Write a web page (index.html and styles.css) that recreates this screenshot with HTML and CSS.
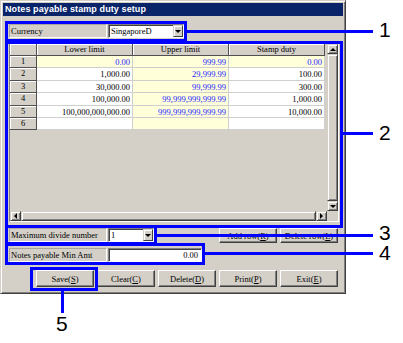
FILE: index.html
```html
<!DOCTYPE html>
<html lang="en">

<head>
    <meta charset="UTF-8">
    <title>Notes payable stamp duty setup</title>
    <link rel="stylesheet" href="styles.css">
</head>

<body>
    <div class="stage">
        <div class="dialog">
            <div class="titlebar">Notes payable stamp duty setup</div>

            <div class="content">
                <!-- Currency -->
                <div class="field-row">
                    <div class="field-label">Currency</div>
                    <div class="combo combo-currency">
                        <span class="combo-text">SingaporeD</span>
                        <span class="combo-btn"><span class="arrow-down"></span></span>
                    </div>
                </div>

                <!-- Rate table -->
                <div class="grid">
                    <div class="grid-main">
                        <div class="grid-view">
                            <div class="sheet">
                                <div class="hd"></div>
                                <div class="hd">Lower limit</div>
                                <div class="hd">Upper limit</div>
                                <div class="hd">Stamp duty</div>

                                <div class="hd">1</div>
                                <div class="cell yl bl">0.00</div>
                                <div class="cell yl bl">999.99</div>
                                <div class="cell yl bl">0.00</div>

                                <div class="hd">2</div>
                                <div class="cell">1,000.00</div>
                                <div class="cell yl bl">29,999.99</div>
                                <div class="cell">100.00</div>

                                <div class="hd">3</div>
                                <div class="cell">30,000.00</div>
                                <div class="cell yl bl">99,999.99</div>
                                <div class="cell">300.00</div>

                                <div class="hd">4</div>
                                <div class="cell">100,000.00</div>
                                <div class="cell yl bl">99,999,999,999.99</div>
                                <div class="cell">1,000.00</div>

                                <div class="hd">5</div>
                                <div class="cell">100,000,000,000.00</div>
                                <div class="cell yl bl">999,999,999,999.99</div>
                                <div class="cell">10,000.00</div>

                                <div class="hd">6</div>
                                <div class="cell"></div>
                                <div class="cell yl"></div>
                                <div class="cell"></div>
                            </div>
                        </div>
                        <div class="vscroll">
                            <div class="sb-btn"><span class="arrow-up"></span></div>
                            <div class="sb-thumb"></div>
                            <div class="sb-btn"><span class="arrow-down"></span></div>
                        </div>
                    </div>
                    <div class="hscroll">
                        <div class="sb-btn"><span class="arrow-left"></span></div>
                        <div class="sb-thumb"></div>
                        <div class="sb-btn"><span class="arrow-right"></span></div>
                        <div class="sb-corner"></div>
                    </div>
                </div>

                <!-- Divide number + row buttons -->
                <div class="field-row row-divide">
                    <div class="field-label">Maximum divide number</div>
                    <div class="combo combo-divide">
                        <span class="combo-text">1</span>
                        <span class="combo-btn"><span class="arrow-down"></span></span>
                    </div>
                    <div class="row-buttons">
                        <button class="btn">Add row(<u>R</u>)</button>
                        <button class="btn">Delete row(<u>L</u>)</button>
                    </div>
                </div>

                <!-- Min amount -->
                <div class="field-row row-min">
                    <div class="field-label">Notes payable Min Amt</div>
                    <div class="text-input">0.00</div>
                </div>

                <!-- Action buttons -->
                <div class="button-row">
                    <button class="btn">Save(<u>S</u>)</button>
                    <button class="btn">Clear(<u>C</u>)</button>
                    <button class="btn">Delete(<u>D</u>)</button>
                    <button class="btn">Print(<u>P</u>)</button>
                    <button class="btn">Exit(<u>E</u>)</button>
                </div>
            </div>
        </div>

        <!-- Callouts -->
        <div class="callout-box box-1"></div>
        <div class="callout-line line-1"></div>
        <div class="callout-num num-1">1</div>

        <div class="callout-box box-2"></div>
        <div class="callout-line line-2"></div>
        <div class="callout-num num-2">2</div>

        <div class="callout-box box-3"></div>
        <div class="callout-line line-3"></div>
        <div class="callout-num num-3">3</div>

        <div class="callout-box box-4"></div>
        <div class="callout-line line-4"></div>
        <div class="callout-num num-4">4</div>

        <div class="callout-box box-5"></div>
        <div class="callout-line line-5"></div>
        <div class="callout-num num-5">5</div>
    </div>
</body>

</html>
```

FILE: styles.css
```css
/* Win2000-style dialog with numbered callouts */
body {
    margin: 0;
    background: #fff;
    font-family: "Liberation Serif", serif;
    font-size: 8.5px;
    color: #000;
}

.stage {
    position: relative;
    width: 403px;
    height: 343px;
    overflow: hidden;
}

.dialog {
    width: 346px;
    height: 294px;
    box-sizing: border-box;
    background: #d4d0c8;
    border: 1px solid;
    border-color: #d4d0c8 #404040 #404040 #d4d0c8;
    box-shadow: inset 1px 1px #fff, inset -1px -1px #808080;
    padding: 2px;
}

.titlebar {
    height: 13px;
    line-height: 13px;
    padding-left: 2px;
    background: #0a246a;
    color: #fff;
    font-family: "Liberation Sans", sans-serif;
    font-weight: bold;
    font-size: 9px;
    letter-spacing: 0.1px;
}

.content {
    padding: 8px 5px 0 6px;
}

/* Label + field rows */
.field-row {
    display: flex;
    align-items: flex-start;
    height: 14px;
}

.field-label {
    width: 98px;
    height: 14px;
    box-sizing: border-box;
    line-height: 12px;
    padding-left: 1px;
    border: 1px solid;
    border-color: #a9a69f #fff #fff #a9a69f;
    white-space: nowrap;
}

.combo,
.text-input {
    display: flex;
    height: 14px;
    box-sizing: border-box;
    margin-left: 1px;
    background: #fff;
    border: 1px solid;
    border-color: #808080 #fff #fff #808080;
    box-shadow: inset 1px 1px #404040;
}

.combo-currency {
    width: 76px;
}

.combo-divide {
    width: 46px;
}

.combo-text {
    flex: 1;
    line-height: 12px;
    padding-left: 2px;
}

.combo-btn {
    display: flex;
    align-items: center;
    justify-content: center;
    width: 10px;
    height: 12px;
    box-sizing: border-box;
    background: #d4d0c8;
    border: 1px solid;
    border-color: #d4d0c8 #404040 #404040 #d4d0c8;
    box-shadow: inset 1px 1px #fff;
}

.text-input {
    display: block;
    width: 94px;
    text-align: right;
    line-height: 12px;
    padding-right: 3px;
}

.arrow-down,
.arrow-up,
.arrow-left,
.arrow-right {
    width: 0;
    height: 0;
}

.arrow-down {
    border-left: 3px solid transparent;
    border-right: 3px solid transparent;
    border-top: 3px solid #000;
}

.arrow-up {
    border-left: 3px solid transparent;
    border-right: 3px solid transparent;
    border-bottom: 3px solid #000;
}

.arrow-left {
    border-top: 3px solid transparent;
    border-bottom: 3px solid transparent;
    border-right: 3px solid #000;
}

.arrow-right {
    border-top: 3px solid transparent;
    border-bottom: 3px solid transparent;
    border-left: 3px solid #000;
}

/* Grid */
.grid {
    width: 330px;
    height: 179px;
    box-sizing: border-box;
    margin-top: 5px;
    border: 1px solid;
    border-color: #808080 #fff #fff #808080;
    background: #d4d0c8;
}

.grid-main {
    display: flex;
    height: 167px;
}

.grid-view {
    width: 317px;
    overflow: hidden;
}

.sheet {
    display: grid;
    grid-template-columns: 27px 96px 96px 96px;
    grid-template-rows: 12px repeat(6, 12.4px);
}

.hd {
    box-sizing: border-box;
    background: #d4d0c8;
    border-right: 1px solid #505050;
    border-bottom: 1px solid #505050;
    box-shadow: inset 1px 1px #fff;
    text-align: center;
    line-height: 11px;
}

.cell {
    box-sizing: border-box;
    background: #fff;
    border-right: 1px solid #cfcfcf;
    border-bottom: 1px solid #cfcfcf;
    text-align: right;
    padding-right: 2px;
    line-height: 12px;
    white-space: nowrap;
}

.cell.yl {
    background: #ffffd9;
}

.cell.bl {
    color: #2424ff;
}

/* Scrollbars */
.vscroll {
    display: flex;
    flex-direction: column;
    width: 11px;
}

.hscroll {
    display: flex;
    height: 10px;
}

.sb-btn {
    display: flex;
    align-items: center;
    justify-content: center;
    flex: 0 0 10px;
    height: 10px;
    box-sizing: border-box;
    background: #d4d0c8;
    border: 1px solid;
    border-color: #d4d0c8 #404040 #404040 #d4d0c8;
    box-shadow: inset 1px 1px #fff, inset -1px -1px #808080;
}

.vscroll .sb-btn {
    flex-basis: 10px;
    width: 11px;
}

.hscroll .sb-btn {
    width: 11px;
    flex-basis: 11px;
}

.sb-thumb {
    flex: 1;
    box-sizing: border-box;
    background: #d4d0c8;
    border: 1px solid;
    border-color: #d4d0c8 #404040 #404040 #d4d0c8;
    box-shadow: inset 1px 1px #fff, inset -1px -1px #808080;
}

.sb-corner {
    width: 11px;
    background: #d4d0c8;
}

/* Buttons */
.row-divide {
    margin-top: 6px;
}

.row-buttons {
    display: flex;
    gap: 3px;
    margin-left: auto;
}

.row-min {
    margin-top: 6px;
}

.button-row {
    display: flex;
    gap: 3px;
    margin-top: 8px;
    padding-left: 27px;
}

.btn {
    width: 58px;
    height: 17px;
    padding: 0;
    background: #d4d0c8;
    border: 1px solid;
    border-color: #fff #404040 #404040 #fff;
    box-shadow: inset -1px -1px #808080;
    font-family: "Liberation Serif", serif;
    font-size: 8.5px;
    color: #000;
}

.row-buttons .btn {
    height: 15px;
}

/* Callouts */
.callout-box {
    position: absolute;
    box-sizing: border-box;
    border: 3px solid #0000ff;
}

.callout-line {
    position: absolute;
    background: #0000ff;
}

.callout-num {
    position: absolute;
    font-family: "Liberation Sans", sans-serif;
    font-size: 21px;
    line-height: 18px;
    color: #000;
}

.box-1 { left: 5px; top: 21px; width: 182px; height: 21px; }
.line-1 { left: 187px; top: 30px; width: 186px; height: 3px; }
.num-1 { left: 379px; top: 21px; }

.box-2 { left: 5px; top: 41px; width: 338px; height: 187px; }
.line-2 { left: 343px; top: 132px; width: 30px; height: 3px; }
.num-2 { left: 379px; top: 124px; }

.box-3 { left: 5px; top: 225px; width: 152px; height: 20px; }
.line-3 { left: 157px; top: 234px; width: 216px; height: 3px; }
.num-3 { left: 379px; top: 224px; }

.box-4 { left: 5px; top: 243px; width: 200px; height: 22px; }
.line-4 { left: 205px; top: 252px; width: 168px; height: 3px; }
.num-4 { left: 379px; top: 244px; }

.box-5 { left: 30px; top: 267px; width: 68px; height: 24px; }
.line-5 { left: 61px; top: 291px; width: 3px; height: 22px; }
.num-5 { left: 56px; top: 315px; }
```
